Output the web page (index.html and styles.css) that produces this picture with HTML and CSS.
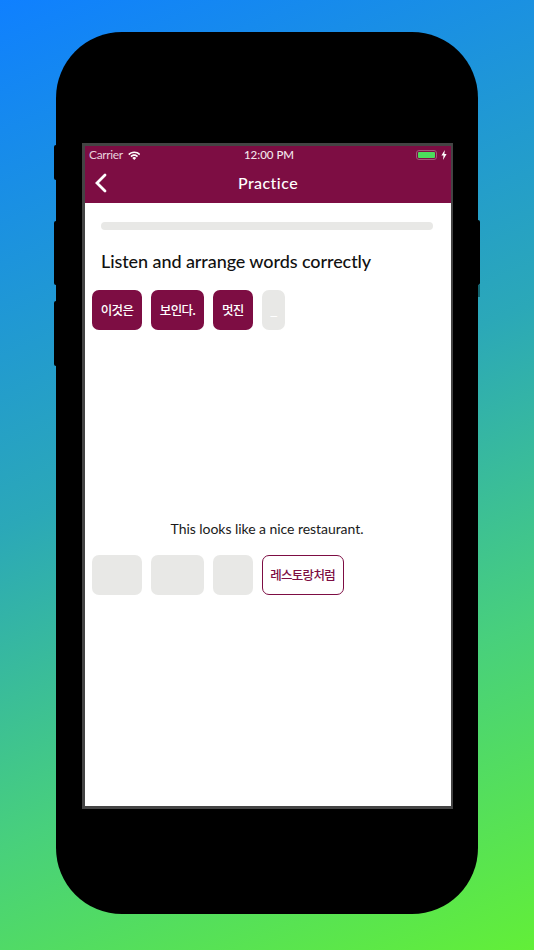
FILE: index.html
```html
<!DOCTYPE html>
<html lang="en">
<head>
<meta charset="utf-8">
<title>Practice</title>
<link rel="stylesheet" href="styles.css">
</head>
<body>
<div class="phone">
  <span class="btn btn-mute"></span>
  <span class="btn btn-up"></span>
  <span class="btn btn-down"></span>
  <span class="btn btn-power"></span>
  <span class="btn btn-notch"></span>
  <main class="screen">
    <header class="appbar">
      <div class="status">
        <div class="status-left">
          <span>Carrier</span>
          <svg class="wifi" viewBox="0 0 14 10" width="12.500" height="9"><path d="M7 .5C4.300.5 2 1.500.2 3.300l1.300 1.400C3 3.200 4.900 2.300 7 2.300s4 .9 5.500 2.400l1.300-1.400C12 1.500 9.700.5 7 .5zM7 3.700c-1.700 0-3.200.7-4.300 1.800L4 6.900c.8-.8 1.800-1.300 3-1.300s2.200.5 3 1.300l1.300-1.400C10.200 4.400 8.700 3.700 7 3.700zM7 6.800c-.9 0-1.600.3-2.200.9L7 10l2.200-2.300c-.6-.6-1.300-.9-2.200-.9z" fill="#fff"/></svg>
        </div>
        <span class="clock">12:00 PM</span>
        <div class="status-right">
          <span class="battery"><span class="battery-fill"></span></span>
          <svg class="bolt" viewBox="0 0 6 10" width="6" height="10"><path d="M3.800 0 .4 5.600h2.100L2 10l3.600-5.900H3.400z" fill="#fff"/></svg>
        </div>
      </div>
      <nav class="navbar">
        <svg class="back" viewBox="0 0 14 22" width="14" height="22"><path d="M11 3 3 11l8 8" fill="none" stroke="#fff" stroke-width="2.800" stroke-linecap="round"/></svg>
        <h1 class="title">Practice</h1>
      </nav>
    </header>
    <section class="content">
      <div class="progress"></div>
      <h2 class="prompt">Listen and arrange words correctly</h2>
      <div class="chips">
        <span class="chip filled w50">이것은</span>
        <span class="chip filled w53">보인다.</span>
        <span class="chip filled w40">멋진</span>
        <span class="chip blank w23">_</span>
      </div>
      <p class="sentence">This looks like a nice restaurant.</p>
      <div class="chips">
        <span class="chip empty w50"></span>
        <span class="chip empty w53"></span>
        <span class="chip empty w40"></span>
        <span class="chip outline">레스토랑처럼</span>
      </div>
    </section>
  </main>
</div>
</body>
</html>
```
FILE: styles.css
```css
* { box-sizing: border-box; }
html, body { margin: 0; height: 950px; }
body {
  width: 534px;
  overflow: hidden;
  padding: 32px 56px 36px;
  background: linear-gradient(157deg, #0f80ff 0%, #2ba8b8 45%, #48d07c 72%, #62ef38 100%);
  font-family: "Lato", "Noto Sans CJK KR", sans-serif;
}
.phone {
  position: relative;
  height: 882px;
  background: #000;
  border-radius: 66px;
  padding: 111px 25px 0 26px;
}
.btn { position: absolute; background: #000; }
.btn-mute { left: -2px; top: 113px; width: 2px; height: 35px; border-radius: 2px 0 0 2px; }
.btn-up { left: -2px; top: 189px; width: 2px; height: 64px; border-radius: 2px 0 0 2px; }
.btn-down { left: -2px; top: 269px; width: 2px; height: 65px; border-radius: 2px 0 0 2px; }
.btn-power { right: -2px; top: 188px; width: 2px; height: 65px; border-radius: 0 2px 2px 0; }
.btn-notch { right: -2px; top: 253px; width: 2px; height: 12px; background: rgba(0, 50, 50, .55); }
.screen {
  display: flex;
  flex-direction: column;
  width: 371px;
  height: 666px;
  border: 3px solid #444;
  border-right-width: 2px;
  background: #fff;
}
.appbar { background: #7d0d43; color: #fff; height: 57px; flex: none; }
.status {
  display: grid;
  grid-template-columns: 1fr auto 1fr;
  align-items: center;
  height: 18px;
  padding: 0 4px;
  font-size: 12px;
  line-height: 18px;
}
.status-left { display: flex; align-items: center; gap: 5px; color: #e8d2dd; letter-spacing: -.35px; }
.clock { margin-left: 2px; font-size: 11.500px; font-weight: 500; color: #f3e6ec; }
.status-right { display: flex; align-items: center; justify-content: flex-end; gap: 4px; }
.battery {
  display: block;
  width: 21px;
  height: 10px;
  padding: 1px;
  border: 1px solid #a4557c;
  border-radius: 3px;
}
.battery-fill { display: block; height: 100%; background: #4cdc5c; border-radius: 1px; }
.navbar {
  position: relative;
  display: flex;
  align-items: center;
  justify-content: center;
  height: 39px;
  padding-bottom: 2px;
}
.back { position: absolute; left: 9px; top: 8px; }
.title { margin: 0; font-size: 16px; font-weight: 500; line-height: 22px; letter-spacing: .45px; }
.content { padding: 19px 18px 0 7px; }
.progress {
  height: 8px;
  margin: 0 0 0 9px;
  background: #e8e8e6;
  border-radius: 4px;
}
.prompt {
  margin: 19px 0 17px 9px;
  font-size: 18px;
  font-weight: 500;
  line-height: 24px;
  letter-spacing: -.08px;
  color: #111;
}
.chips { display: flex; gap: 9px; }
.chip {
  display: flex;
  align-items: center;
  justify-content: center;
  height: 40px;
  padding-bottom: 1px;
  border-radius: 7px;
  font-size: 12.500px;
  font-weight: 500;
  letter-spacing: -.7px;
  font-family: "Noto Sans CJK KR", sans-serif;
}
.filled { background: #7d0d43; color: #fff; }
.blank { background: #e8e8e6; color: #fff; }
.empty { background: #e8e8e6; }
.outline {
  width: 82px;
  background: #fff;
  border: 1px solid #7d0d43;
  color: #7d0d43;
}
.w50 { width: 50px; }
.w53 { width: 53.100px; }
.w40 { width: 39.500px; }
.w23 { width: 23.500px; }
.sentence {
  margin: 189px 0 16px;
  padding-left: 9px;
  text-align: center;
  font-size: 14px;
  line-height: 20px;
  letter-spacing: -.05px;
  color: #1a1a1a;
}
```
